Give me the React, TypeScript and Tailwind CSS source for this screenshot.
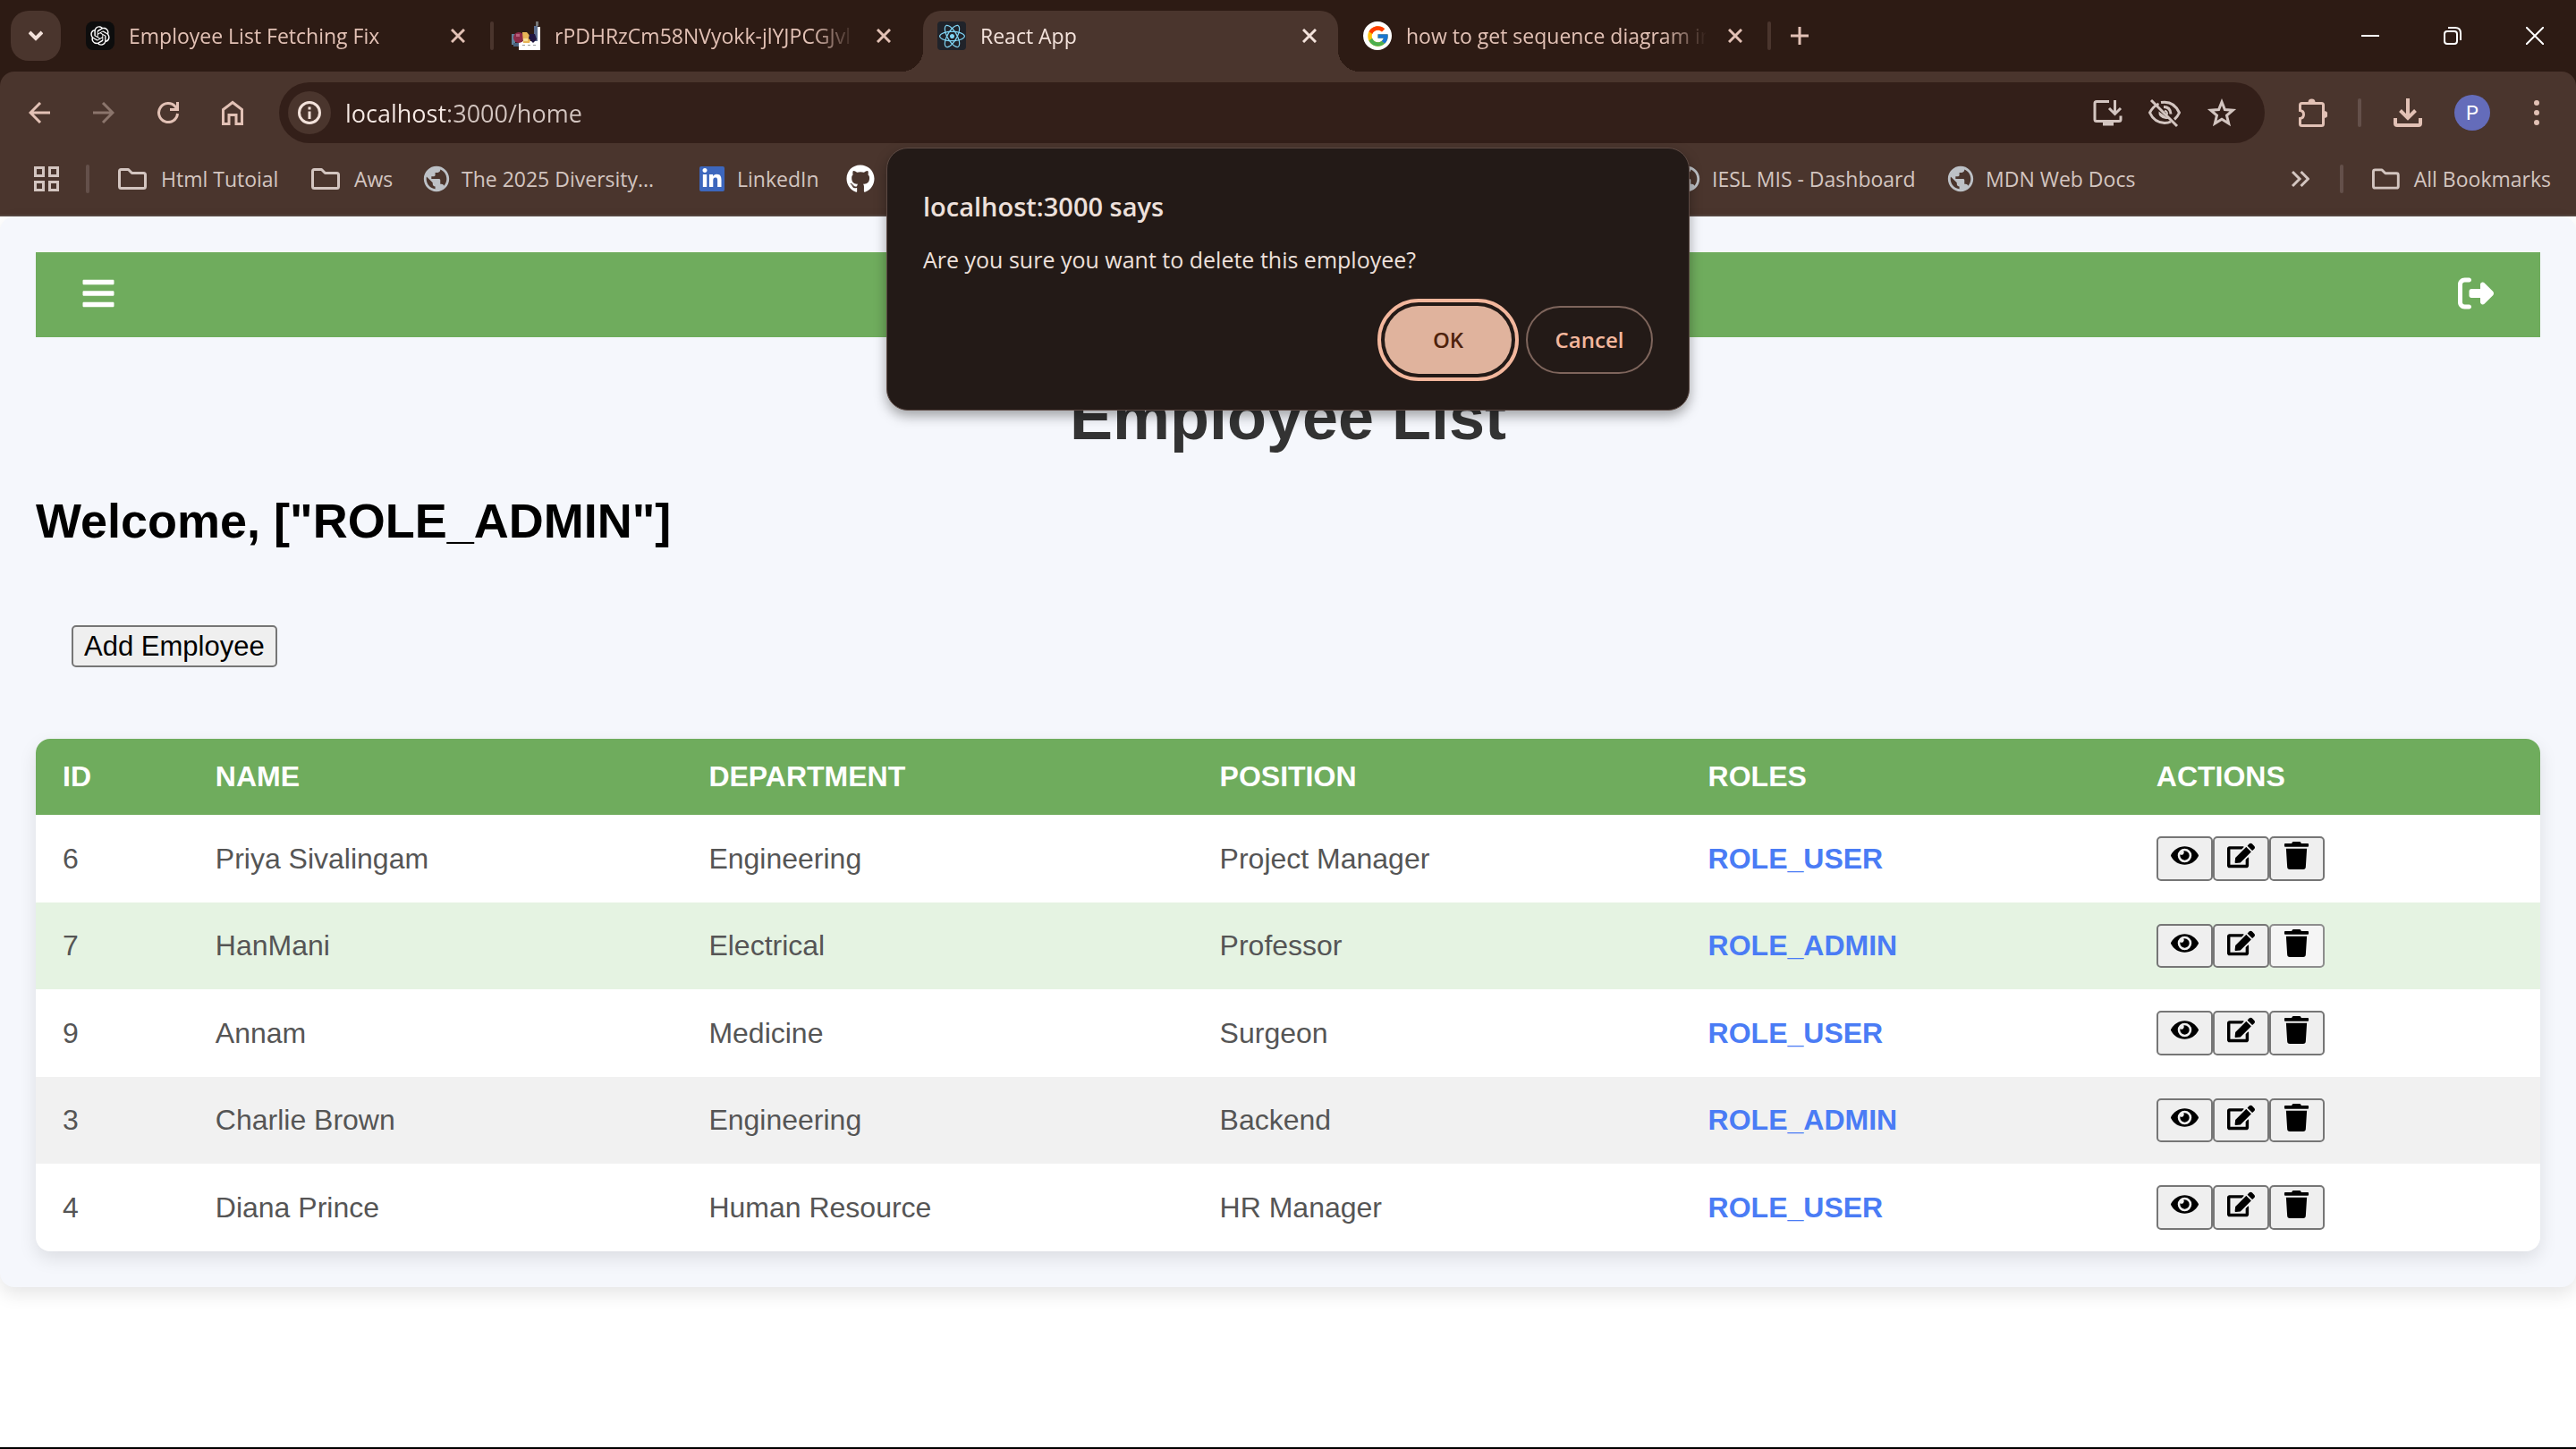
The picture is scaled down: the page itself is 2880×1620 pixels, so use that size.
import type { ReactNode } from "react";
import { FaBars, FaEdit, FaEye, FaGithub, FaReact, FaTrash } from "react-icons/fa";
import { FaLinkedinIn, FaRightFromBracket } from "react-icons/fa6";
import { FcGoogle } from "react-icons/fc";
import { MdPublic } from "react-icons/md";
import { RiOpenaiFill } from "react-icons/ri";

type IconProps = { size: number; children: ReactNode; stroke?: number; className?: string };

function Line({ size, children, stroke = 3, className }: IconProps) {
  return (
    <svg
      width={size}
      height={size}
      viewBox={`0 0 ${size} ${size}`}
      fill="none"
      stroke="currentColor"
      strokeWidth={stroke}
      className={className}
      aria-hidden="true"
    >
      {children}
    </svg>
  );
}

function CloseIcon() {
  return (
    <Line size={16}>
      <path d="M1 1l14 14M15 1L1 15" />
    </Line>
  );
}

function FolderIcon() {
  return (
    <svg width="32" height="24" viewBox="0 0 32 24" fill="none" stroke="currentColor" strokeWidth="3" strokeLinejoin="round" aria-hidden="true">
      <path d="M3.500 1.500h8l4 4h13q2 0 2 2v13q0 2-2 2h-25q-2 0-2-2v-17q0-2 2-2z" />
    </svg>
  );
}

function PictureIcon() {
  return (
    <svg width="32" height="32" viewBox="0 0 32 32" aria-hidden="true">
      <path d="M8 22h18V6h6v26H8z" fill="#ffffff" />
      <path d="M27 0h3v5h-3z" fill="#777777" />
      <path d="M25 5h4v17h-4z" fill="#5d6f8f" />
      <path d="M0 14h4v12H0z" fill="#5f8099" />
      <path d="M2 24h6v4H2z" fill="#4a627e" />
      <circle cx="8" cy="18" r="6" fill="#8c2a48" />
      <path d="M5 14h4v3H5z" fill="#b75f7c" />
      <path d="M12 12h5l5 6-2 6h-7z" fill="#e8b557" />
      <path d="M13 19h5v3h-5z" fill="#f6df9a" />
      <path d="M20 14h6l2 6-4 4-5-5z" fill="#1f1540" />
      <path d="M12 26h3v1h-3zM18 26h3v1h-3zM24 26h3v1h-3z" fill="#9a9a9a" />
    </svg>
  );
}

function Tab({ title, icon, active = false, divider = false }: { title: string; icon: ReactNode; active?: boolean; divider?: boolean }) {
  return (
    <div className="flex h-full w-[476px] shrink-0 items-center">
      <div
        className={
          active
            ? "relative mt-3 flex h-[68px] w-[464px] items-center rounded-t-[20px] bg-[#4a352d] pb-3 pr-6 pl-4 text-[#f3e2db] before:absolute before:bottom-0 before:-left-6 before:size-6 before:bg-[radial-gradient(circle_at_0_0,transparent_24px,#4a352d_24px)] after:absolute after:-right-6 after:bottom-0 after:size-6 after:bg-[radial-gradient(circle_at_100%_0,transparent_24px,#4a352d_24px)]"
            : "flex h-full w-[464px] items-center pr-6 pl-4 text-[#e2c1b5]"
        }
      >
        <span className="flex size-8 shrink-0 items-center justify-center">{icon}</span>
        <span className="mr-6 ml-4 flex-1 overflow-hidden text-[23px] whitespace-nowrap [mask-image:linear-gradient(to_right,black_calc(100%-48px),transparent)]">
          {title}
        </span>
        <button type="button" aria-label={`Close ${title}`}>
          <CloseIcon />
        </button>
      </div>
      {divider && <span className="ml-1 h-8 w-1 rounded-full bg-[#4a352d]" />}
    </div>
  );
}

function NavButton({ label, children }: { label: string; children: ReactNode }) {
  return (
    <button type="button" aria-label={label} className="flex h-[68px] w-[72px] shrink-0 items-center justify-center">
      {children}
    </button>
  );
}

function Bookmark({ label, icon, className }: { label?: string; icon: ReactNode; className: string }) {
  return (
    <a href="#" aria-label={label ?? "GitHub"} className={`flex shrink-0 items-center whitespace-nowrap ${className}`}>
      {icon}
      {label && <span>{label}</span>}
    </a>
  );
}

function Globe() {
  return <MdPublic size={34} className="-m-[3px] shrink-0 text-[#bdc1c6]" />;
}

function TabStrip() {
  return (
    <div className="flex h-20 items-center bg-[#2d1b14]">
      <button type="button" aria-label="Search tabs" className="mr-3 ml-3 flex size-14 shrink-0 items-center justify-center rounded-[20px] bg-[#4a352d] text-[#f3e2db]">
        <Line size={16} stroke={4}>
          <path d="M1 4l7 7 7-7" />
        </Line>
      </button>
      <Tab
        title="Employee List Fetching Fix"
        divider
        icon={
          <span className="flex size-8 items-center justify-center rounded-lg bg-[#0d0d0d] text-white">
            <RiOpenaiFill size={26} />
          </span>
        }
      />
      <Tab title="rPDHRzCm58NVyokk-jlYJPCGJvl" icon={<PictureIcon />} />
      <Tab
        title="React App"
        active
        icon={
          <span className="flex size-8 items-center justify-center rounded-sm bg-[#20232a] text-[#7fd3f2]">
            <FaReact size={29} />
          </span>
        }
      />
      <Tab
        title="how to get sequence diagram in"
        divider
        icon={
          <span className="flex size-8 items-center justify-center rounded-full bg-white">
            <FcGoogle size={27} />
          </span>
        }
      />
      <button type="button" aria-label="New tab" className="flex size-14 items-center justify-center text-[#e2c1b5]">
        <Line size={20}>
          <path d="M10 0v20M0 10h20" />
        </Line>
      </button>
      <div className="ml-auto flex text-white">
        <button type="button" aria-label="Minimize" className="flex h-20 w-[92px] items-center justify-center">
          <Line size={20} stroke={2}>
            <path d="M0 10h20" />
          </Line>
        </button>
        <button type="button" aria-label="Restore" className="flex h-20 w-[92px] items-center justify-center">
          <Line size={20} stroke={2}>
            <rect x="1" y="5" width="14" height="14" rx="3" />
            <path d="M5 1h8q6 0 6 6v8" />
          </Line>
        </button>
        <button type="button" aria-label="Close window" className="flex h-20 w-[92px] items-center justify-center">
          <Line size={20} stroke={2}>
            <path d="M0 0l20 20M20 0L0 20" />
          </Line>
        </button>
      </div>
    </div>
  );
}

function Toolbar() {
  return (
    <div className="flex items-center pt-3 pr-2 pl-2 text-[#e2c1b5]">
      <NavButton label="Back">
        <Line size={24}>
          <path d="M24 12H2M13 1L2 12l11 11" />
        </Line>
      </NavButton>
      <NavButton label="Forward">
        <Line size={24} className="text-[#8b756c]">
          <path d="M0 12h22M11 1l11 11-11 11" />
        </Line>
      </NavButton>
      <NavButton label="Reload">
        <Line size={24}>
          <path d="M22.500 13A10.500 10.500 0 1 1 20 5.200L22 8M22.500 0v8.500H14" />
        </Line>
      </NavButton>
      <NavButton label="Home">
        <Line size={28}>
          <path d="M3.500 10.500L14 2.500l10.500 8v16H18v-10h-8v10H3.500z" />
        </Line>
      </NavButton>
      <div className="ml-4 flex h-[68px] flex-1 items-center rounded-full bg-[#331f19] pr-4 pl-2.5 text-[#d3c5c0]">
        <button type="button" aria-label="View site information" className="flex size-12 shrink-0 items-center justify-center rounded-full bg-[#4a352d] text-[#f3e2db]">
          <Line size={26}>
            <circle cx="13" cy="13" r="11.500" />
            <path d="M13 11.500V20M13 6.500v3" />
          </Line>
        </button>
        <input
          type="text"
          aria-label="Address and search bar"
          defaultValue="localhost:3000/home"
          className="ml-4 h-12 min-w-0 flex-1 bg-[linear-gradient(to_right,#f6e9e4_115px,#d3c5c0_115px)] bg-clip-text text-[27px] text-transparent outline-none"
        />
        <button type="button" aria-label="Install app" className="flex h-12 w-16 items-center justify-center">
          <Line size={34}>
            <path d="M19 4.500H5q-2 0-2 2v18q0 2 2 2h25q2 0 2-2v-4M25.500 3v15M19 12l6.500 6.500L32 12" />
            <path d="M12 29.500h12" stroke="currentColor" strokeWidth="4" />
          </Line>
        </button>
        <button type="button" aria-label="Third-party cookies blocked" className="flex h-12 w-16 items-center justify-center">
          <Line size={38}>
            <path d="M12.500 9Q6 12 2.500 19q5 11 16.500 11.500 4 0 7-1.500M15 7.600q14-2.500 20.500 11.400-2 4.500-5.500 7.500" />
            <path d="M12.500 17.500q-1 7.500 8 8.500l3.500 0z" fill="currentColor" stroke="none" />
            <path d="M18 12.500q7.500 0 8 8" />
            <path d="M19 17q3 0 3 4" strokeWidth="2" />
            <path d="M4 5l29 29" />
          </Line>
        </button>
        <button type="button" aria-label="Bookmark this tab" className="flex h-12 w-16 items-center justify-center">
          <Line size={34}>
            <path d="M17 5l3.400 8.500 9 .7-6.900 5.900 2.200 8.900L17 24.200 9.300 29l2.200-8.900-6.900-5.900 9-.7z" />
          </Line>
        </button>
      </div>
      <button type="button" aria-label="Extensions" className="ml-4 flex h-14 w-[74px] items-center justify-center">
        <Line size={34}>
          <path d="M5.500 6.500h22q2 0 2 2v21q0 2-2 2h-22q-2 0-2-2v-6q4-.5 4-4.500t-4-4.500v-6q0-2 2-2z" strokeWidth="3" />
          <path d="M12.500 5.500a4 4 0 0 1 8 0zM30.500 15a4 4 0 0 1 0 8z" fill="currentColor" stroke="none" />
        </Line>
      </button>
      <span className="ml-3.5 h-8 w-1 rounded-full bg-[#64504a]" />
      <button type="button" aria-label="Downloads" className="ml-4 flex h-14 w-[72px] items-center justify-center">
        <Line size={34} stroke={4}>
          <path d="M17 1v22M8.500 14.500l8.500 8.500 8.500-8.500M3 23v6q0 2 2 2h24q2 0 2-2v-6" />
        </Line>
      </button>
      <button type="button" aria-label="Profile" className="mx-4 flex size-10 items-center justify-center rounded-full bg-[#646cba] font-[Roboto] text-[22px] text-white">
        P
      </button>
      <button type="button" aria-label="Browser menu" className="flex h-14 w-[72px] items-center justify-center">
        <svg width="6" height="28" viewBox="0 0 6 28" fill="currentColor" aria-hidden="true">
          <circle cx="3" cy="3" r="3" />
          <circle cx="3" cy="14" r="3" />
          <circle cx="3" cy="25" r="3" />
        </svg>
      </button>
    </div>
  );
}

function BookmarksBar() {
  return (
    <nav aria-label="Bookmarks" className="flex h-20 items-center pr-7 pl-[38px] text-[23px] text-[#d3c5c0]">
      <button type="button" aria-label="Apps" className="shrink-0">
        <Line size={28}>
          <path d="M1.500 1.500h9v9h-9zM17.500 1.500h9v9h-9zM1.500 17.500h9v9h-9zM17.500 17.500h9v9h-9z" />
        </Line>
      </button>
      <span className="mr-8 ml-[30px] h-8 w-1 shrink-0 rounded-full bg-[#64504a]" />
      <Bookmark label="Html Tutoial" icon={<FolderIcon />} className="w-[216px] gap-4" />
      <Bookmark label="Aws" icon={<FolderIcon />} className="w-[126px] gap-4" />
      <Bookmark label="The 2025 Diversity..." icon={<Globe />} className="w-[308px] gap-3.5" />
      <Bookmark
        label="LinkedIn"
        icon={
          <span className="flex size-7 items-center justify-center rounded-xs bg-[#3d67bd] text-white">
            <FaLinkedinIn size={24} />
          </span>
        }
        className="w-[164px] gap-3.5"
      />
      <Bookmark icon={<FaGithub size={32} className="text-white" />} className="w-[926px]" />
      <Bookmark label="IESL MIS - Dashboard" icon={<Globe />} className="w-[306px] gap-3.5" />
      <Bookmark label="MDN Web Docs" icon={<Globe />} className="gap-3.5" />
      <button type="button" aria-label="More bookmarks" className="ml-auto">
        <Line size={20}>
          <path d="M1 2l8 8-8 8M10.500 2l8 8-8 8" />
        </Line>
      </button>
      <span className="mr-8 ml-[34px] h-8 w-1 shrink-0 rounded-full bg-[#64504a]" />
      <Bookmark label="All Bookmarks" icon={<FolderIcon />} className="w-[200px] gap-4" />
    </nav>
  );
}

function ConfirmDialog() {
  return (
    <div
      role="alertdialog"
      aria-labelledby="confirm-title"
      aria-describedby="confirm-message"
      className="absolute top-[165px] left-1/2 flex w-[898px] -translate-x-1/2 flex-col rounded-3xl border border-[#5d4a44] bg-[#231a17] p-10 text-[#ede0db] shadow-[0_6px_14px_rgba(0,0,0,0.35)]"
    >
      <h2 id="confirm-title" className="mt-1 text-[29px] leading-[42px] font-semibold">
        localhost:3000 says
      </h2>
      <p id="confirm-message" className="mt-5 text-[25px] leading-9">
        Are you sure you want to delete this employee?
      </p>
      <div className="mt-[34px] flex justify-end gap-4 text-[24px] font-semibold">
        <button
          type="button"
          className="h-[76px] w-[142px] rounded-full bg-[#e0b39d] text-[#4e220c] outline-4 outline-offset-4 outline-[#f3b79d]"
        >
          OK
        </button>
        <button type="button" className="h-[76px] w-[142px] rounded-full border-2 border-[#7e655c] text-[#f3b79d]">
          Cancel
        </button>
      </div>
    </div>
  );
}

const employees = [
  { id: 6, name: "Priya Sivalingam", department: "Engineering", position: "Project Manager", role: "ROLE_USER" },
  { id: 7, name: "HanMani", department: "Electrical", position: "Professor", role: "ROLE_ADMIN", selected: true },
  { id: 9, name: "Annam", department: "Medicine", position: "Surgeon", role: "ROLE_USER" },
  { id: 3, name: "Charlie Brown", department: "Engineering", position: "Backend", role: "ROLE_ADMIN" },
  { id: 4, name: "Diana Prince", department: "Human Resource", position: "HR Manager", role: "ROLE_USER" },
];

function ActionButton({ label, children, light = false }: { label: string; children: ReactNode; light?: boolean }) {
  return (
    <button
      type="button"
      aria-label={label}
      className={
        light
          ? "flex h-[50px] w-[63px] justify-center rounded-[5px] border-2 border-[#8d8d8d] bg-[#f5f5f5] pt-1 text-[31px] group-even:h-[49px] last:w-[62px]"
          : "flex h-[50px] w-[63px] justify-center rounded-[5px] border-2 border-[#767676] bg-[#efefef] pt-1 text-[31px] group-even:h-[49px] last:w-[62px]"
      }
    >
      {children}
    </button>
  );
}

function EmployeeTable() {
  return (
    <div className="mt-20 overflow-hidden rounded-2xl bg-white shadow-[0_8px_20px_rgba(0,0,0,0.1)]">
      <table className="w-full table-fixed text-left text-[32px] leading-[37px] text-[#555555]">
        <colgroup>
          <col className="w-[6.1%]" />
          <col className="w-[19.7%]" />
          <col className="w-[20.4%]" />
          <col className="w-[19.5%]" />
          <col className="w-[17.9%]" />
          <col className="w-[16.4%]" />
        </colgroup>
        <thead className="bg-[#6fac5d] text-white">
          <tr>
            {["ID", "NAME", "DEPARTMENT", "POSITION", "ROLES", "ACTIONS"].map((heading) => (
              <th key={heading} scope="col" className="px-[30px] py-6 font-bold">
                {heading}
              </th>
            ))}
          </tr>
        </thead>
        <tbody>
          {employees.map((e) => (
            <tr key={e.id} className={e.selected ? "group bg-[#e5f3e2]" : "group even:bg-[#f1f1f1]"}>
              <td className="px-[30px]">{e.id}</td>
              <td className="px-[30px]">{e.name}</td>
              <td className="px-[30px]">{e.department}</td>
              <td className="px-[30px]">{e.position}</td>
              <td className="px-[30px] font-bold text-[#4a7cf5]">{e.role}</td>
              <td className="px-[30px] py-6 text-black">
                <div className="flex">
                  <ActionButton label={`View ${e.name}`}>
                    <FaEye />
                  </ActionButton>
                  <ActionButton label={`Edit ${e.name}`}>
                    <FaEdit />
                  </ActionButton>
                  <ActionButton label={`Delete ${e.name}`} light={e.selected}>
                    <FaTrash />
                  </ActionButton>
                </div>
              </td>
            </tr>
          ))}
        </tbody>
      </table>
    </div>
  );
}

export default function App() {
  return (
    <div className="relative flex min-h-screen flex-col overflow-x-hidden border-b-2 border-black bg-white font-['Open_Sans','Noto_Sans',sans-serif]">
      <header className="bg-[#2d1b14]">
        <TabStrip />
        <div className="rounded-t-2xl border-b-2 border-[#574741] bg-[#4a352d]">
          <Toolbar />
          <BookmarksBar />
        </div>
      </header>
      <main className="rounded-2xl bg-[#f5f7fc] p-10 font-['Liberation_Sans',Arial,sans-serif] shadow-[0_8px_20px_rgba(0,0,0,0.1)]">
        <div className="flex h-[95px] items-center justify-between bg-[#6fac5d] px-[52px] pb-1 text-[40px] text-white">
          <button type="button" aria-label="Open menu" className="-ml-0.5">
            <FaBars />
          </button>
          <button type="button" aria-label="Log out">
            <FaRightFromBracket />
          </button>
        </div>
        <h1 className="mt-12 text-center text-[72px] leading-[82px] font-bold text-[#333333]">Employee List</h1>
        <h2 className="mt-11 text-[54px] leading-[62px] font-bold text-black">Welcome, ["ROLE_ADMIN"]</h2>
        <button type="button" className="mt-[86px] ml-10 block h-[47px] rounded-[5px] border-2 border-[#767676] bg-[#efefef] px-3 text-[31px] leading-[43px] text-black">
          Add Employee
        </button>
        <EmployeeTable />
      </main>
      <ConfirmDialog />
    </div>
  );
}
